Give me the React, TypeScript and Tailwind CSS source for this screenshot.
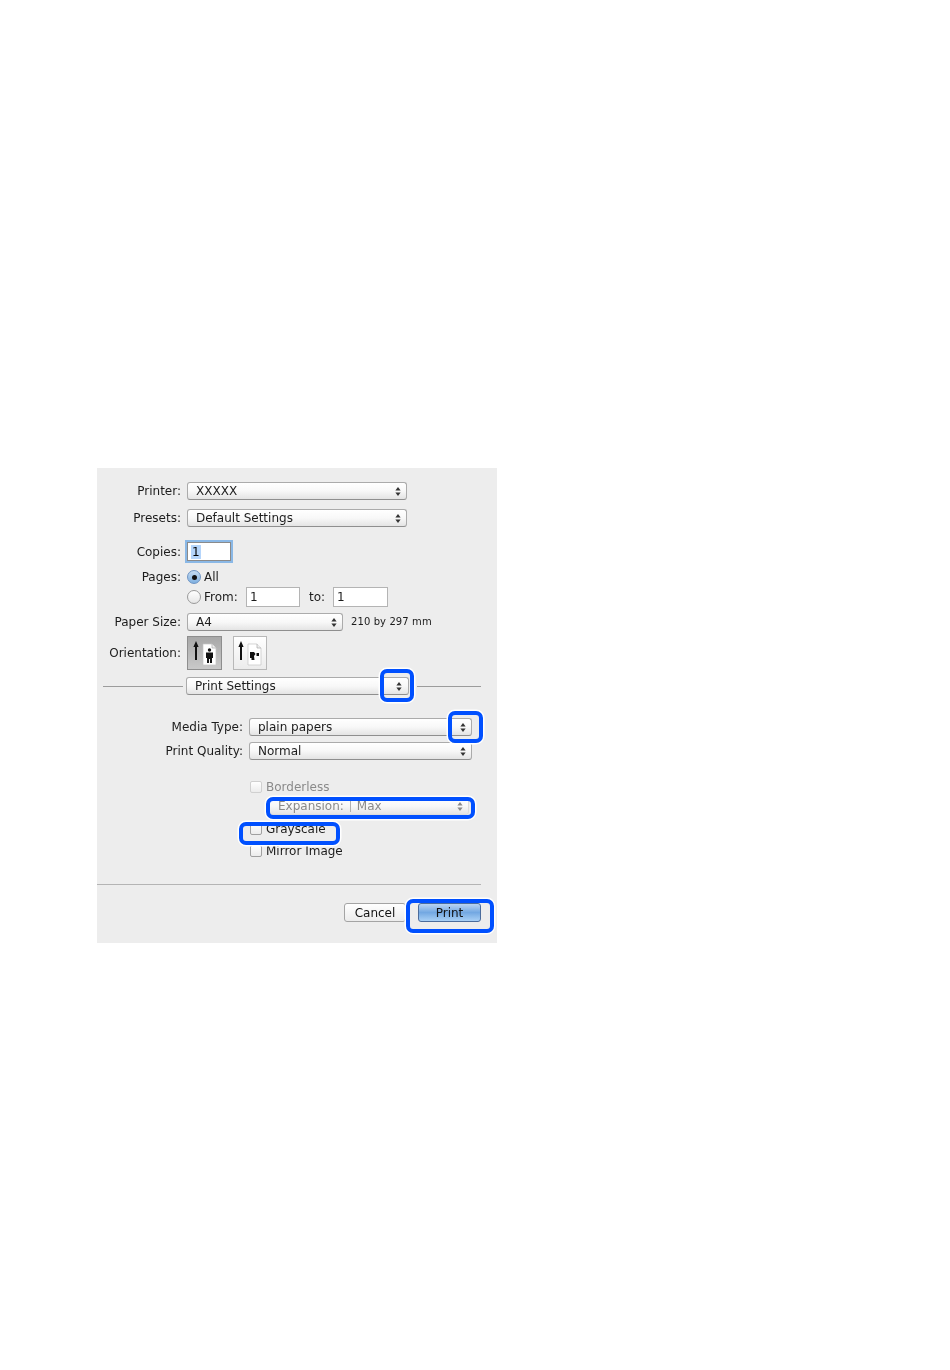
import React from "react";

const font = "font-['DejaVu_Sans',sans-serif]";

function Stepper({ color = "#333" }: { color?: string }) {
  return (
    <svg width="6" height="11" viewBox="0 0 6 11" className="shrink-0">
      <path d="M3 1 L5.6 4.4 H0.4 Z" fill={color} />
      <path d="M3 10 L5.6 6.6 H0.4 Z" fill={color} />
    </svg>
  );
}

function Select({ text, w, right = 5, disabled }: { text: React.ReactNode; w: string; right?: number; disabled?: boolean }) {
  return (
    <div
      className={`${w} h-[18px] shrink-0 flex items-center justify-between pl-2 rounded-[3px] border ${
        disabled ? "border-[#dcdcdc] text-[#8a8a8a]" : "border-[#ababab] border-b-[#8f8f8f] text-[#1c1c1c]"
      } bg-gradient-to-b from-white via-[#f8f8f8] to-[#e4e4e4]`}
      style={{ paddingRight: right }}
    >
      <span>{text}</span>
      <Stepper color={disabled ? "#888" : "#333"} />
    </div>
  );
}

function Label({ children, w = "w-[84px]" }: { children: React.ReactNode; w?: string }) {
  return <div className={`${w} shrink-0 text-right text-[#1c1c1c]`}>{children}</div>;
}

function Check({ label, muted }: { label: string; muted?: boolean }) {
  return (
    <div className="flex items-center gap-[4px] h-[14px] ml-[153px]">
      <div className={`w-[12px] h-[12px] rounded-[2px] border bg-gradient-to-b from-white to-[#ececec] ${muted ? "border-[#d0d0d0]" : "border-[#a0a0a0]"}`} />
      <span className={muted ? "text-[#8a8a8a]" : "text-[#1c1c1c]"}>{label}</span>
    </div>
  );
}

function Field({ w, children }: { w: string; children: React.ReactNode }) {
  return <div className={`${w} h-[20px] shrink-0 bg-white border border-[#b4b4b4] pl-[3px] flex items-center text-[#1c1c1c]`}>{children}</div>;
}

function OrientIcon({ landscape }: { landscape?: boolean }) {
  return (
    <svg width="28" height="28" viewBox="0 0 28 28">
      <path d="M5 2 L7.6 8 H6 V21 H4 V8 H2.4 Z" fill="#111" />
      <path d="M12 5 H21 L25 9 V26 H12 Z" fill="#fff" stroke="#c4c4c4" strokeWidth="0.7" />
      <path d="M21 5 V9 H25" fill="#eee" stroke="#aaa" strokeWidth="0.7" />
      {landscape ? (
        <path d="M14 13 H18 L19.5 15 L18 17 L18.5 21 H15.5 L15.5 19 H14 Z M20.5 14 H23 V17 H20.5 Z" fill="#111" />
      ) : (
        <>
          <circle cx="18.5" cy="11" r="1.7" fill="#111" />
          <path d="M15 13.5 H22 V19 H21 V24 H19 V20 H18 V24 H16 V19 H15 Z" fill="#111" />
        </>
      )}
    </svg>
  );
}

function Mark({ cls }: { cls: string }) {
  return <div className={`absolute rounded-[7px] border-[4px] border-[#0050ff] shadow-[0_0_0_1.5px_#ffffff] ${cls}`} />;
}

export default function App() {
  return (
    <div className={`min-h-[1370px] bg-white pt-[468px] pl-[97px] text-[12px] leading-[18px] ${font}`}>
      <div className="relative w-[400px] h-[475px] bg-[#ededed] pt-[14px] blur-[0.35px]">
        <div className="flex gap-[6px]">
          <Label>Printer:</Label>
          <Select w="w-[220px]" text="XXXXX" />
        </div>
        <div className="flex gap-[6px] mt-[9px]">
          <Label>Presets:</Label>
          <Select w="w-[220px]" text="Default Settings" />
        </div>

        <div className="flex gap-[6px] items-center mt-[15px]">
          <Label>Copies:</Label>
          <div className="w-[44px] h-[19px] bg-white border border-[#8a8a8a] shadow-[0_0_0_2px_#8ab8e6] pl-[3px] flex items-center">
            <span className="bg-[#b5d5fb] px-[1px] leading-[14px]">1</span>
          </div>
        </div>

        <div className="flex gap-[6px] items-center mt-[9px] h-[14px]">
          <Label>Pages:</Label>
          <div className="w-[14px] h-[14px] rounded-full border border-[#6d94c4] bg-gradient-to-b from-[#c6dcf2] to-[#7fb0e0] flex items-center justify-center">
            <div className="w-[5px] h-[5px] rounded-full bg-[#111]" />
          </div>
          <span className="-ml-[3px] text-[#1c1c1c]">All</span>
        </div>
        <div className="flex items-center mt-[3px] ml-[90px] h-[20px] text-[#1c1c1c]">
          <div className="w-[14px] h-[14px] rounded-full border border-[#9a9a9a] bg-gradient-to-b from-white to-[#e6e6e6]" />
          <span className="ml-[3px] w-[42px]">From:</span>
          <Field w="w-[54px]">1</Field>
          <span className="ml-[9px] w-[24px]">to:</span>
          <Field w="w-[55px]">1</Field>
        </div>

        <div className="flex gap-[6px] items-center mt-[6px]">
          <Label>Paper Size:</Label>
          <Select w="w-[156px]" text="A4" />
          <span className="ml-[2px] text-[10px] text-[#1c1c1c] tracking-[0.1px]">210 by 297 mm</span>
        </div>

        <div className="flex gap-[6px] items-center mt-[5px]">
          <Label>Orientation:</Label>
          <div className="flex gap-[11px]">
            <div className="w-[35px] h-[34px] border border-[#8e8e8e] bg-gradient-to-b from-[#a8a8a8] to-[#c9c9c9] flex items-center justify-center">
              <OrientIcon />
            </div>
            <div className="w-[34px] h-[34px] border border-[#b8b8b8] bg-gradient-to-b from-white to-[#ececec] flex items-center justify-center">
              <OrientIcon landscape />
            </div>
          </div>
        </div>

        <div className="flex items-center mt-[7px] ml-[6px] w-[378px]">
          <div className="w-[80px] h-px bg-[#9c9c9c]" />
          <div className="ml-[3px]">
            <Select w="w-[223px]" text="Print Settings" right={6} />
          </div>
          <div className="ml-[8px] flex-1 h-px bg-[#9c9c9c]" />
        </div>

        <div className="flex gap-[6px] items-center mt-[23px]">
          <Label w="w-[146px]">Media Type:</Label>
          <Select w="w-[223px]" text="plain papers" />
        </div>
        <div className="flex gap-[6px] items-center mt-[6px]">
          <Label w="w-[146px]">Print Quality:</Label>
          <Select w="w-[223px]" text="Normal" />
        </div>

        <div className="mt-[20px]">
          <Check label="Borderless" muted />
        </div>
        <div className="mt-[3px] ml-[172px] w-[200px]">
          <Select
            w="w-[200px]"
            disabled
            text={
              <span className="flex items-center">
                Expansion:<span className="mx-[6px] w-px h-[11px] bg-[#b0b0b0]" />Max
              </span>
            }
          />
        </div>
        <div className="mt-[7px]">
          <Check label="Grayscale" />
        </div>
        <div className="mt-[8px]">
          <Check label="Mirror Image" />
        </div>

        <div className="mt-[26px] w-[384px] h-px bg-[#b4b4b4]" />

        <div className="flex mt-[18px] ml-[247px]">
          <div className="w-[62px] h-[19px] rounded-[3px] border border-[#a4a4a4] bg-gradient-to-b from-white to-[#ececec] flex items-center justify-center text-[#111]">
            Cancel
          </div>
          <div className="ml-[12px] w-[63px] h-[19px] rounded-[3px] border border-[#4b6c9c] bg-gradient-to-b from-[#b9d4f2] via-[#73a8e2] to-[#a9d0f5] flex items-center justify-center text-[#111]">
            Print
          </div>
        </div>

        <Mark cls="left-[283px] top-[201px] w-[34px] h-[33px]" />
        <Mark cls="left-[351px] top-[243px] w-[35px] h-[32px]" />
        <Mark cls="left-[169px] top-[329px] w-[209px] h-[22px]" />
        <Mark cls="left-[142px] top-[354px] w-[101px] h-[23px]" />
        <Mark cls="left-[309px] top-[431px] w-[88px] h-[34px]" />
      </div>
    </div>
  );
}
